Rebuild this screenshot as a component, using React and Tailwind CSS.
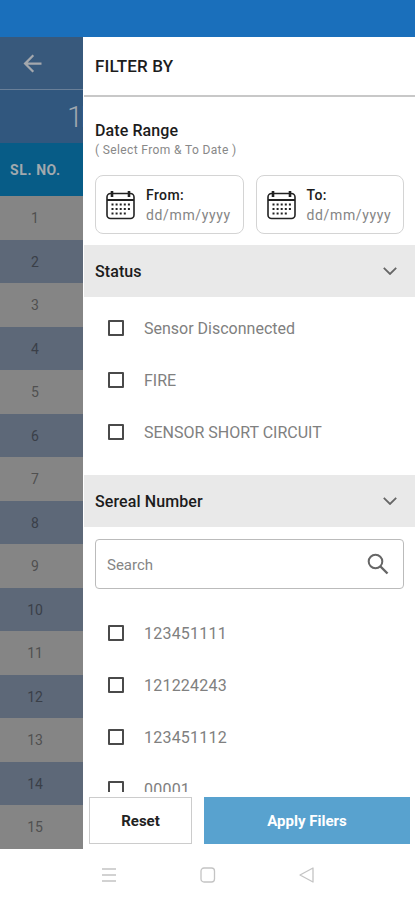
import { useState } from "react";
import { MdArrowBack } from "react-icons/md";

const STATUSES = ["Sensor Disconnected", "FIRE", "SENSOR SHORT CIRCUIT"];
const SERIALS = ["123451111", "121224243", "123451112", "00001"];
const ROWS = Array.from({ length: 15 }, (_, i) => i + 1);

function CalendarIcon() {
  return (
    <svg viewBox="0 0 30 30" className="w-[30px] h-[30px] shrink-0" fill="none" stroke="#222" strokeWidth="1.6">
      <rect x="1" y="3.5" width="27" height="25" rx="3.5" />
      <path d="M1 10H28" strokeWidth="2" />
      <path d="M6 1v6M23 1v6" strokeWidth="2.6" />
      <path d="M5.5 14.5H24M5.5 19H24M5.5 23.5H21" strokeWidth="2" strokeDasharray="2 2.1" />
    </svg>
  );
}

function DateBox({ label }) {
  return (
    <button className="flex flex-1 items-center gap-[10px] h-[59px] pl-[10px] rounded-lg border-[1.5px] border-[#d4d4d4] text-left">
      <CalendarIcon />
      <span className="flex flex-col pt-px text-[14px] leading-[20px] whitespace-nowrap">
        <span className="font-medium tracking-[0.4px] text-[#1c1c1c]">{label}</span>
        <span className="text-[#858585] tracking-[0.65px]">dd/mm/yyyy</span>
      </span>
    </button>
  );
}

function SectionBar({ title, open, onToggle }) {
  return (
    <button
      onClick={onToggle}
      className="flex shrink-0 w-full h-[52px] items-center justify-between pl-[11px] pr-[18px] bg-[#e9e9e9]"
    >
      <span className="pt-[2px] text-[16px] font-medium tracking-[0.1px] text-[#1c1c1c]">{title}</span>
      <svg
        viewBox="0 0 14 8"
        className={`w-[14px] h-2 ${open ? "" : "-rotate-90"}`}
        fill="none"
        stroke="#666"
        strokeWidth="1.8"
      >
        <path d="M.8 .8L7 7L13.2 .8" />
      </svg>
    </button>
  );
}

function CheckRow({ label, checked, onChange, textClass }) {
  return (
    <label className="flex shrink-0 h-[52px] items-center gap-[20px] pl-[24px]">
      <input
        type="checkbox"
        checked={checked}
        onChange={onChange}
        className="appearance-none w-[16px] h-[16px] rounded-[1px] border-2 border-[#4a4a4a] checked:bg-[#58a2cf]"
      />
      <span className={`pt-[2px] text-[16px] text-[#808080] ${textClass}`}>{label}</span>
    </label>
  );
}

export default function App() {
  const [selected, setSelected] = useState([]);
  const [statusOpen, setStatusOpen] = useState(true);
  const [serialOpen, setSerialOpen] = useState(true);

  const toggle = (value) =>
    setSelected((prev) => (prev.includes(value) ? prev.filter((v) => v !== value) : [...prev, value]));

  return (
    <div className="flex flex-col w-[415px] h-[900px] overflow-hidden bg-white font-[Roboto,sans-serif]">
      {/* status bar */}
      <div className="h-[37px] shrink-0 bg-[#1a6fbb]" />

      <div className="flex h-[812px] shrink-0">
        {/* dimmed table behind the drawer */}
        <div className="w-[83px] shrink-0 overflow-hidden">
          <div className="flex h-[53px] items-center pl-[19px] border-b-[1.5px] border-[#697f98] bg-[#38597c]">
            <MdArrowBack className="w-[27px] h-[27px] text-[#a4a8ad]" />
          </div>
          <div className="flex h-[53px] items-center pt-[2px] pl-[67px] bg-[#31577e] text-[29px] tracking-[-2.5px] font-light text-[#a0a8b0] whitespace-nowrap">
            1F
          </div>
          <div className="flex h-[53px] items-center pt-px pl-[10px] bg-[#075c87] text-[14px] font-bold tracking-[0.6px] text-[#a1a9ae]">
            SL. NO.
          </div>
          <div>
            {ROWS.map((n) => (
              <div
                key={n}
                className="flex h-[43.5px] items-center justify-center pt-[2px] pr-[13px] text-[14px] odd:bg-[#858585] odd:text-[#505050] even:bg-[#5d6878] even:text-[#3a3f48]"
              >
                {n}
              </div>
            ))}
          </div>
        </div>

        {/* drawer */}
        <div className="flex flex-1 flex-col bg-white pl-[1px]">
          <div className="flex h-[60px] shrink-0 items-center pt-[2px] pl-[11px] border-b-2 border-[#c8c8c8] text-[17px] font-medium tracking-[0.15px] text-[#1c1c1c]">
            FILTER BY
          </div>

          <div className="h-[148px] shrink-0 pl-[11px] pr-[11px] pt-[24px]">
            <h2 className="text-[16px] leading-[20px] font-medium tracking-[0.1px] text-[#1c1c1c]">Date Range</h2>
            <p className="text-[12px] leading-[18px] tracking-[0.37px] text-[#888]">( Select From &amp; To Date )</p>
            <div className="flex gap-[12px] mt-[16px]">
              <DateBox label="From:" />
              <DateBox label="To:" />
            </div>
          </div>

          <SectionBar title="Status" open={statusOpen} onToggle={() => setStatusOpen(!statusOpen)} />
          <div className="flex flex-col h-[178px] shrink-0 pt-[5px]">
            {statusOpen &&
              STATUSES.map((s) => (
                <CheckRow
                  key={s}
                  label={s}
                  textClass="tracking-normal"
                  checked={selected.includes(s)}
                  onChange={() => toggle(s)}
                />
              ))}
          </div>

          <SectionBar title="Sereal Number" open={serialOpen} onToggle={() => setSerialOpen(!serialOpen)} />
          <div className="flex flex-col h-[265px] shrink-0 overflow-hidden pt-[12px]">
            <div className="flex h-[50px] shrink-0 mx-[11px] pl-[11px] pr-[14px] items-center rounded border-[1.5px] border-[#bbb]">
              <span className="flex-1 pt-[2px] text-[15px] text-[#858585]">Search</span>
              <svg viewBox="0 0 22 22" className="w-[22px] h-[22px]" fill="none" stroke="#666" strokeWidth="2">
                <circle cx="8.5" cy="8.5" r="6.8" />
                <path d="M13.5 13.5L20.5 20.5" strokeWidth="2.4" />
              </svg>
            </div>
            <div className="flex flex-col mt-[18px]">
              {serialOpen &&
                SERIALS.map((s) => (
                  <CheckRow
                    key={s}
                    label={s}
                    textClass="tracking-[0.22px]"
                    checked={selected.includes(s)}
                    onChange={() => toggle(s)}
                  />
                ))}
            </div>
          </div>

          <div className="flex shrink-0 gap-[12px] pt-[5px] pl-[5px] pr-[5px]">
            <button
              onClick={() => setSelected([])}
              className="w-[103px] h-[47px] pt-[2px] border-[1.5px] border-[#ccc] text-[15px] font-bold text-[#222]"
            >
              Reset
            </button>
            <button className="flex-1 h-[47px] pt-[2px] bg-[#58a2cf] text-[15px] font-bold text-white">Apply Filers</button>
          </div>
        </div>
      </div>

      {/* android navigation */}
      <div className="flex h-[51px] shrink-0 items-center pl-[101px] gap-[83px]">
        <svg viewBox="0 0 16 16" className="w-4 h-4" stroke="#c4c4c4" strokeWidth="1.3">
          <path d="M1 2h14M1 8h14M1 14h14" />
        </svg>
        <svg viewBox="0 0 16 16" className="w-4 h-4" fill="none" stroke="#c4c4c4" strokeWidth="1.3">
          <rect x="1" y="1" width="13.5" height="14" rx="3" />
        </svg>
        <svg viewBox="0 0 16 16" className="w-4 h-4" fill="none" stroke="#c4c4c4" strokeWidth="1.3" strokeLinejoin="round">
          <path d="M14 1v14L1 8z" />
        </svg>
      </div>
    </div>
  );
}
